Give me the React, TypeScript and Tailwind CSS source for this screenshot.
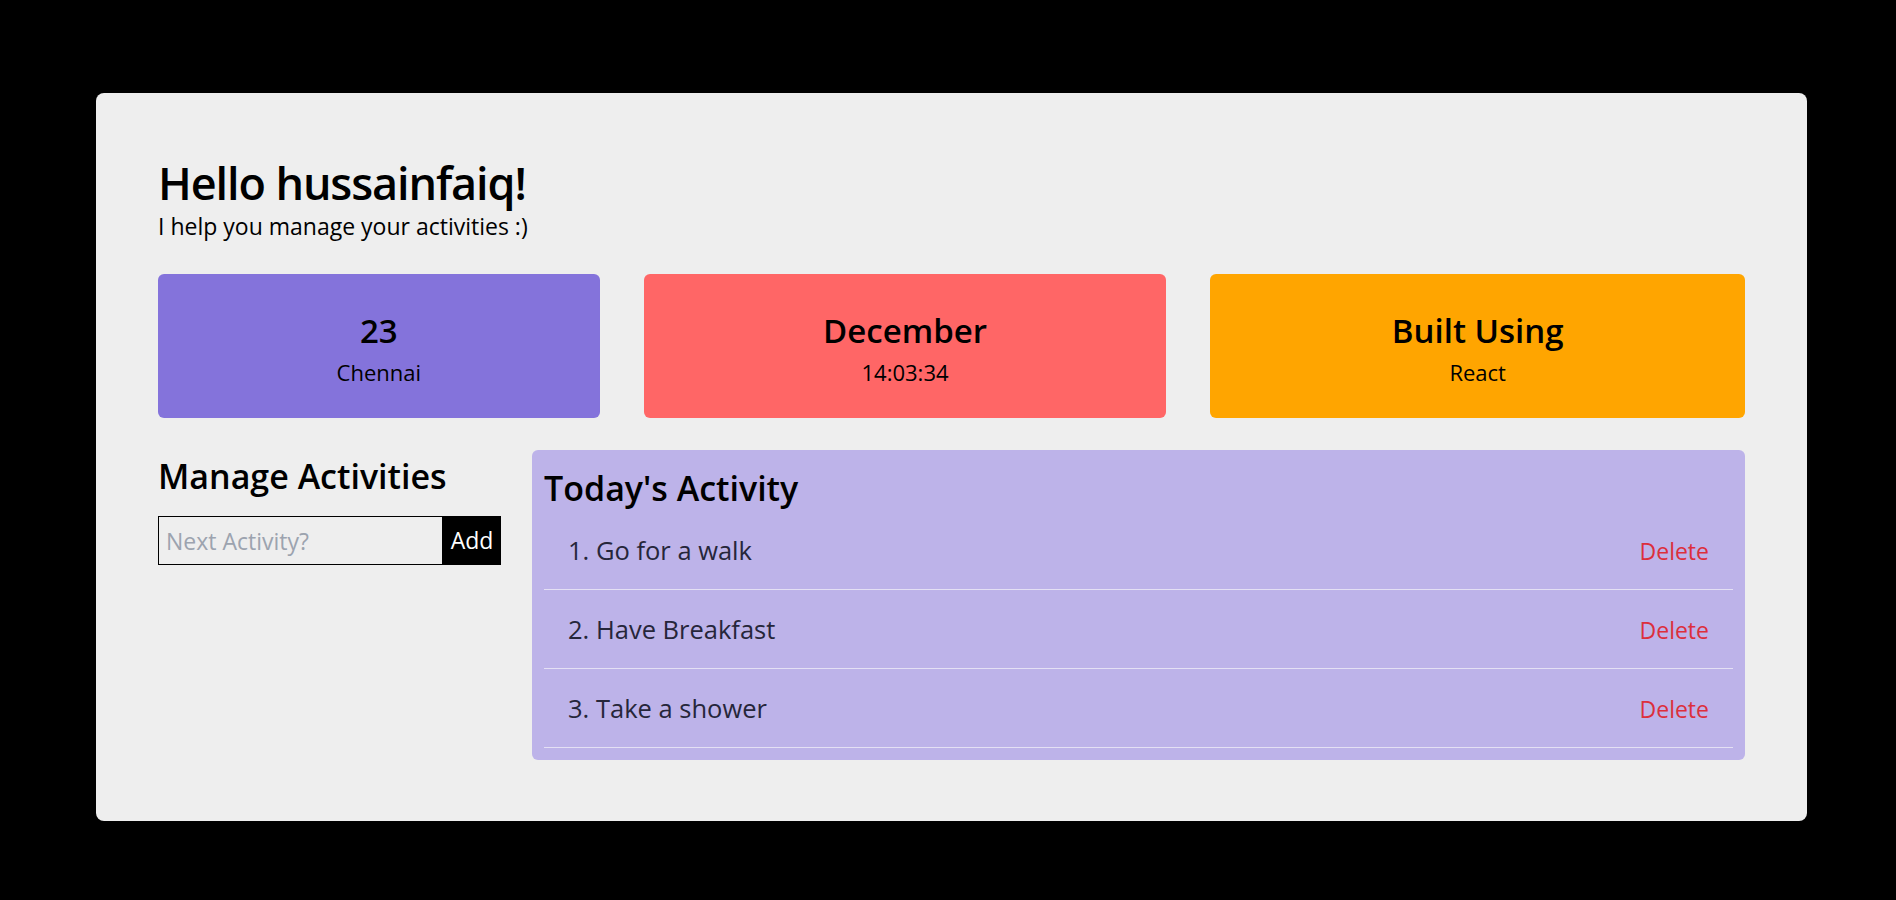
import { useState } from "react";

interface Stat {
  title: string;
  sub: string;
  bg: string;
  width: string;
}

const stats: Stat[] = [
  { title: "23", sub: "Chennai", bg: "bg-[#8473db]", width: "w-[442px]" },
  { title: "December", sub: "14:03:34", bg: "bg-[#ff6666]", width: "w-[523px]" },
  { title: "Built Using", sub: "React", bg: "bg-[#ffa500]", width: "w-[535px]" },
];

export default function App() {
  const [activities, setActivities] = useState<string[]>([
    "Go for a walk",
    "Have Breakfast",
    "Take a shower",
  ]);
  const [next, setNext] = useState("");

  const addActivity = () => {
    if (!next.trim()) return;
    setActivities([...activities, next.trim()]);
    setNext("");
  };

  return (
    <div className="min-h-screen bg-black pt-[93px] pb-[79px] pl-[96px] font-['Open_Sans',sans-serif] text-black">
      <div className="flex h-[728px] w-[1711px] flex-col rounded-lg bg-[#eeeeee] px-[62px] pt-[61px]">
        <h1 className="text-[45px] leading-[58px] font-semibold tracking-[-1.1px]">Hello hussainfaiq!</h1>
        <p className="text-[23px] leading-[28px]">I help you manage your activities :)</p>

        {/* stat cards */}
        <div className="mt-[34px] flex gap-[44px]">
          {stats.map((s) => (
            <div
              key={s.title}
              className={`flex h-[144px] flex-col items-center gap-[9px] rounded-md pt-[37px] ${s.bg} ${s.width}`}
            >
              <h2 className="text-[33px] leading-[40px] font-semibold">{s.title}</h2>
              <p className="text-[22px] leading-[24px]">{s.sub}</p>
            </div>
          ))}
        </div>

        <div className="mt-[32px] flex gap-[31px]">
          {/* left column */}
          <div className="w-[343px] pt-[4px]">
            <h2 className="text-[34px] leading-[44px] font-semibold">Manage Activities</h2>
            <div className="mt-[18px] flex h-[49px]">
              <input
                value={next}
                onChange={(e) => setNext(e.target.value)}
                placeholder="Next Activity?"
                className="h-full w-[285px] border border-black bg-transparent px-[7px] text-[23px] outline-none placeholder:text-[#9ca3af]"
              />
              <button
                onClick={addActivity}
                className="h-full w-[59px] bg-black text-[23px] text-white"
              >
                Add
              </button>
            </div>
          </div>

          {/* today's activity */}
          <div className="flex-1 rounded-md bg-[#bdb3e9] px-[12px] pt-[16px] pb-[12px]">
            <h2 className="text-[34px] leading-[44px] font-semibold">Today's Activity</h2>
            <ul className="mt-[1px]">
              {activities.map((a, i) => (
                <li
                  key={i}
                  className="flex h-[79px] items-baseline justify-between border-b border-[#e4e0f4] px-[24px] pt-[23px]"
                >
                  <span className="text-[25.5px] leading-[32px] text-[#26263a]">
                    {i + 1}. {a}
                  </span>
                  <button
                    onClick={() => setActivities(activities.filter((_, j) => j !== i))}
                    className="text-[23px] leading-[32px] text-[#dc2f3c]"
                  >
                    Delete
                  </button>
                </li>
              ))}
            </ul>
          </div>
        </div>
      </div>
    </div>
  );
}
